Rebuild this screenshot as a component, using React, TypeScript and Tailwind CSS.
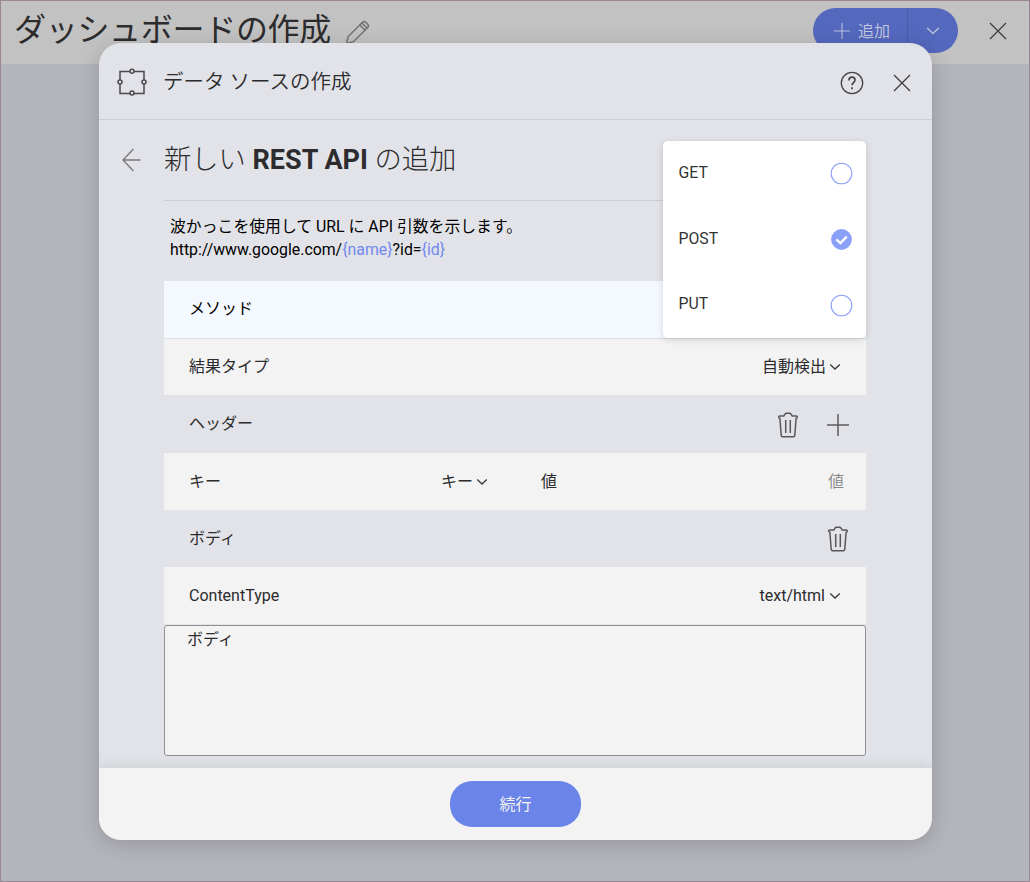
import React, { ReactNode } from "react";

function Cross({ className = "" }: { className?: string }) {
  return (
    <svg width="18" height="18" viewBox="0 0 18 18" fill="none" stroke="#3a3a3c" strokeWidth="1.2" className={className}>
      <path d="M1 1l16 16M17 1L1 17" />
    </svg>
  );
}

function Caret() {
  return (
    <svg width="12" height="8" viewBox="0 0 12 8" fill="none" stroke="#3a3a3c" strokeWidth="1.3" className="ml-[3px]">
      <path d="M1.2 1.500l4.800 4.500 4.800-4.500" />
    </svg>
  );
}

function Trash() {
  return (
    <svg width="22" height="26" viewBox="0 0 22 26" fill="none" stroke="#58585c" strokeWidth="1.500">
      <path d="M2.900 6.200L4.200 23.200c.1 1.100.6 1.500 1.500 1.500h10.600c.9 0 1.400-.4 1.500-1.500l1.300-17c.8 0 1.200-.3 1.200-.9V4.900c0-.6-.4-1-1-1h-4.100L14 2.200c-.3-.7-.8-1-1.500-1h-3c-.7 0-1.200.3-1.500 1L6.800 3.900H2.700c-.6 0-1 .4-1 1v.4c0 .6.4.9 1.200.9zM8.700 8v13M13.300 8v13" />
    </svg>
  );
}

function Plus({ size, color }: { size: number; color: string }) {
  return (
    <svg width={size} height={size} viewBox="0 0 22 22" fill="none" stroke={color} strokeWidth="1.500">
      <path d="M11 0v22M0 11h22" />
    </svg>
  );
}

function Row({ label, className, children }: { label: string; className: string; children?: ReactNode }) {
  return (
    <div className={`flex items-center pl-[25px] ${className}`}>
      <span>{label}</span>
      {children}
    </div>
  );
}

function Option({ label, checked = false }: { label: string; checked?: boolean }) {
  return (
    <div className="flex flex-1 items-center justify-between pr-[13px] pl-[15.500px] text-[15.800px] text-[#333]">
      <span className="relative -top-px">{label}</span>
      <svg width="23" height="23" viewBox="0 0 23 23" fill="none">
        {checked ? (
          <>
            <circle cx="11.500" cy="11.500" r="10.400" fill="#8ba0f8" />
            <path d="M6.300 11.300l4 3.800 6.500-6.500" stroke="#fff" strokeWidth="2.300" />
          </>
        ) : (
          <circle cx="11.500" cy="11.500" r="10.300" stroke="#8ba0f8" strokeWidth="1.100" />
        )}
      </svg>
    </div>
  );
}

export default function App() {
  return (
    <div
      lang="ja"
      className="relative h-[882px] w-[1030px] overflow-hidden border border-[#9b8794] bg-[#b4b5bb] font-['Roboto','Noto_Sans_CJK_JP',sans-serif] text-[16px] leading-6 text-[#2c2c2e]"
    >
      <header className="flex h-[63px] items-start bg-[#c2c2c2] pl-[13px]">
        <h1 className="mt-[6px] text-[32px] leading-[46px] font-normal tracking-[-0.300px] whitespace-nowrap">ダッシュボードの作成</h1>
        <svg width="26" height="26" viewBox="0 0 26 26" fill="none" stroke="#6f6f72" strokeWidth="1.400" className="mt-[18px] ml-[14px]">
          <path d="M1.500 24.500l1.700-7L17.500 3.200c1-1 2.200-1 3.200 0l2 2c1 1 1 2.200 0 3.200L8.400 22.700zM14.800 6l5.100 5.100M17 4l5 5" />
        </svg>
        <div className="mt-[7px] ml-auto flex h-[45px] w-[145px] overflow-hidden rounded-full bg-[#5468be] text-[#c5cae0]">
          <div className="flex w-[95px] items-center border-r border-[#485baa] pl-[21px]">
            <Plus size={16} color="#b9c0df" />
            <span className="relative top-px ml-[8px] font-[350]">追加</span>
          </div>
          <div className="flex flex-1 items-center justify-center">
            <svg width="14" height="8" viewBox="0 0 14 8" fill="none" stroke="#c5cae0" strokeWidth="1.200">
              <path d="M1.200 1L7 6.500 12.800 1" />
            </svg>
          </div>
        </div>
        <Cross className="mt-[21px] mr-[22px] ml-[31px]" />
      </header>

      <section className="absolute top-[42px] left-[98px] flex h-[797px] w-[833px] flex-col overflow-hidden rounded-[22px] bg-[#e2e3e8] shadow-[0_4px_20px_rgba(0,0,0,0.18)]">
        <div className="flex h-[77px] shrink-0 items-center border-b border-[#cccdd2] pt-[2px] pl-[18px]">
          <svg width="30" height="28" viewBox="0 0 30 28" fill="none" stroke="#4a4a4e" strokeWidth="1.500">
            <path d="M13 3.500H3v8.500M3 16v9.500h10M17 25.500h10V16M27 12V3.500H17" />
            <circle cx="15" cy="3.200" r="2" />
            <circle cx="15" cy="25" r="2" />
            <circle cx="3" cy="14" r="2" />
            <circle cx="27" cy="14" r="2" />
          </svg>
          <h2 className="ml-[16px] text-[20.500px] font-[350]">データ ソースの作成</h2>
          <svg width="24" height="24" viewBox="0 0 24 24" fill="none" stroke="#444448" strokeWidth="1.300" className="mt-px ml-auto">
            <circle cx="12" cy="12" r="10.700" />
            <path d="M9 9.400c0-2 1.200-3.200 3-3.200s3 1.100 3 2.800c0 2.400-3 2.700-3 5.300M12 16.300v2" strokeWidth="1.700" />
          </svg>
          <Cross className="mt-px mr-[21px] ml-[29px]" />
        </div>

        <div className="flex flex-1 flex-col pr-[66px] pl-[65px]">
          <div className="-ml-[44px] flex h-[80px] shrink-0 items-center">
            <svg width="20" height="24" viewBox="0 0 20 24" fill="none" stroke="#77777b" strokeWidth="1.300" className="relative left-px">
              <path d="M19.500 12H2M12.500 1L2 12l10.500 11" />
            </svg>
            <h3 className="ml-[24px] text-[27.300px] leading-10 font-light whitespace-nowrap">
              新しい <b className="text-[27px] font-bold">REST API</b> の追加
            </h3>
          </div>
          <div className="h-[81px] shrink-0 border-t border-[#cccdd2] pt-[13px] pl-[6px] text-[15.850px] text-black">
            <p className="relative top-px">波かっこを使用して URL に API 引数を示します。</p>
            <p>
              http://www.google.com/<span className="text-[#7189ef]">{"{name}"}</span>?id=<span className="text-[#7189ef]">{"{id}"}</span>
            </p>
          </div>

          <Row label="メソッド" className="h-[57px] shrink-0 bg-[#f4f8ff] pb-px text-black" />
          <Row label="結果タイプ" className="h-[57px] shrink-0 border-t border-[#dddfe5] bg-[#f3f3f3]">
            <span className="mr-[25px] ml-auto flex items-center">
              自動検出
              <Caret />
            </span>
          </Row>
          <Row label="ヘッダー" className="h-[58px] shrink-0">
            <div className="mt-[2px] mr-[17px] ml-auto flex items-center gap-[28px]">
              <Trash />
              <Plus size={22} color="#5c5c60" />
            </div>
          </Row>
          <Row label="キー" className="h-[57px] shrink-0 bg-[#f3f3f3]">
            <span className="ml-[220px] flex items-center">
              キー
              <Caret />
            </span>
            <span className="ml-[53px]">値</span>
            <span className="mr-[22px] ml-auto font-[350] text-[#858585]">値</span>
          </Row>
          <Row label="ボディ" className="h-[57px] shrink-0">
            <div className="mr-[17px] ml-auto">
              <Trash />
            </div>
          </Row>
          <Row label="ContentType" className="h-[57px] shrink-0 bg-[#f3f3f3]">
            <span className="mt-px mr-[25px] ml-auto flex items-center">
              <span className="mr-px">text/html</span>
              <Caret />
            </span>
          </Row>
          <div className="mt-px h-[131px] shrink-0 rounded-[3px] border border-[#8f9094] bg-[#f3f3f3] pt-[2px] pl-[22px]">ボディ</div>
        </div>

        <footer className="flex h-[72px] shrink-0 items-center justify-center bg-[#f3f3f3] shadow-[0_-2px_12px_rgba(0,0,0,0.1)]">
          <button className="h-[46px] w-[131px] rounded-[22px] bg-[#6a84ea] pt-px text-[16px] text-[#f3f3f3]">続行</button>
        </footer>
      </section>

      <div className="absolute top-[140px] left-[662px] flex h-[197px] w-[203px] flex-col rounded-[5px] bg-white shadow-[0_2px_7px_rgba(0,0,0,0.14)]">
        <Option label="GET" />
        <Option label="POST" checked />
        <Option label="PUT" />
      </div>
    </div>
  );
}
